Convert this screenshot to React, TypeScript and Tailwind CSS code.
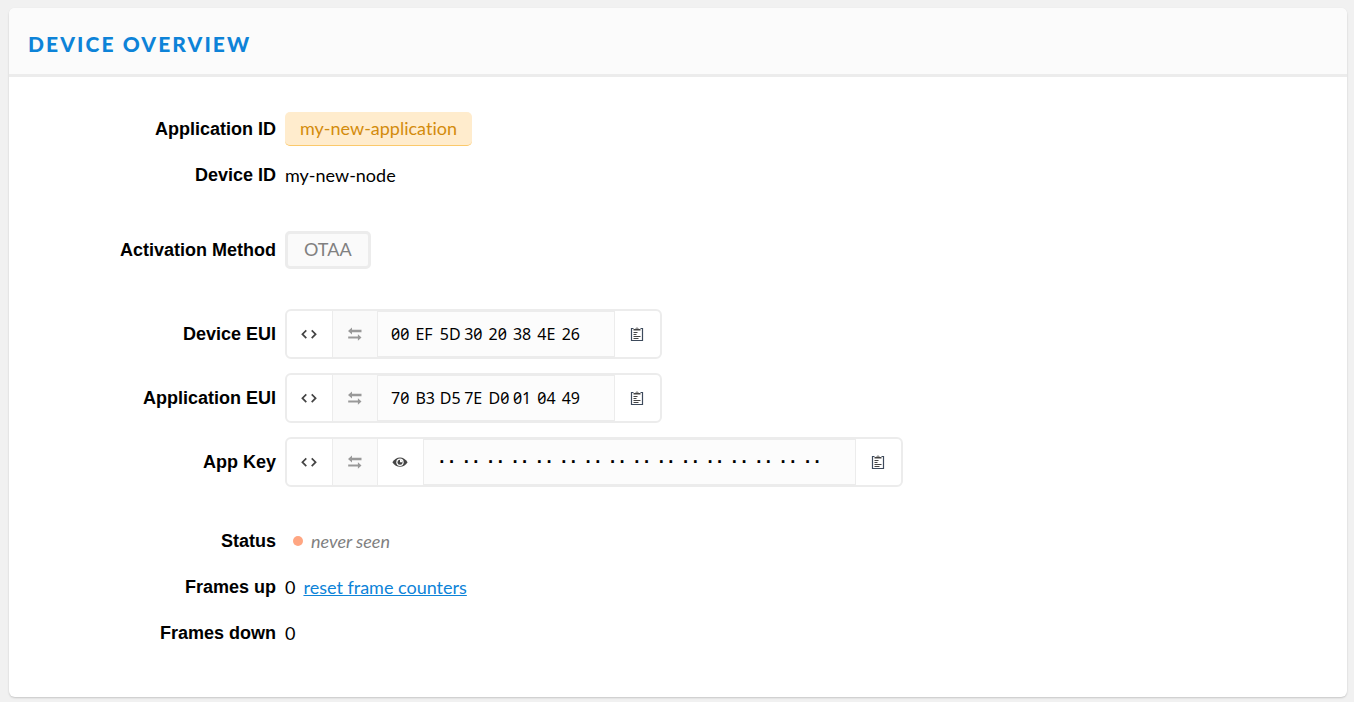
import { useState } from "react";
import type { ReactNode } from "react";

const DEVICE_EUI = ["00", "EF", "5D", "30", "20", "38", "4E", "26"];
const APPLICATION_EUI = ["70", "B3", "D5", "7E", "D0", "01", "04", "49"];
const HIDDEN_KEY = Array.from({ length: 16 }, () => "··");

function CodeIcon() {
  return (
    <svg width="16" height="12" viewBox="0 0 16 12" fill="none" stroke="#444" strokeWidth="1.7" aria-hidden="true">
      <path d="M5.300 2.300 1.400 6.200l3.900 3.900M10.700 2.300l3.900 3.900-3.900 3.900" />
    </svg>
  );
}

function SwapIcon() {
  return (
    <svg width="14" height="14" viewBox="0 0 14 14" fill="#999" aria-hidden="true">
      <path d="M0 4 4 .5v2.200h9.500v2.600H4v2.200zM13.500 10.500l-3.600 3.300v-2.200H.2V9.400h9.700V7.200z" />
    </svg>
  );
}

function EyeIcon() {
  return (
    <svg width="16" height="12" viewBox="0 0 16 12" aria-hidden="true">
      <path d="M.4 6.200C4.200-.2 11.800-.2 15.600 6.200 11.800 12.200 4.200 12.200.4 6.200z" fill="#444" />
      <circle cx="8" cy="6.200" r="3.700" fill="#fff" />
      <circle cx="8" cy="6.200" r="2.500" fill="#444" />
      <path d="M8 6.200V3.700A2.500 2.500 0 0 1 10.500 6.200z" fill="#fff" />
    </svg>
  );
}

function ClipboardIcon() {
  return (
    <svg width="14" height="16" viewBox="0 0 14 16" fill="none" aria-hidden="true">
      <path d="M3.500 2.500h-2v12h11v-12h-2" stroke="#3d4a5c" strokeWidth="1.200" />
      <path d="M3.500 4.500V3h2a1.500 1.500 0 0 1 3 0h2v1.500z" fill="#444" />
      <circle cx="7" cy="2.500" r=".6" fill="#fff" />
      <path d="M3.500 6.500h4M3.500 8.500h3M3.500 10.500h7M3.500 12.500h5" stroke="#444" strokeWidth="1.200" />
    </svg>
  );
}

function Row({ label, children }: { label: string; children: ReactNode }) {
  return (
    <div className="flex min-h-[46px] items-center gap-[9px]">
      <dt className="w-[267px] shrink-0 text-right font-['Liberation_Sans',sans-serif] font-bold">{label}</dt>
      <dd className="flex items-center">{children}</dd>
    </div>
  );
}

function IconButton({ label, className, children }: { label: string; className: string; children: ReactNode }) {
  return (
    <button type="button" aria-label={label} className={`flex items-center justify-center border-[#ececec] pr-[2px] ${className}`}>
      {children}
    </button>
  );
}

function Bytes({ values, className }: { values: string[]; className: string }) {
  return (
    <code
      className={`grid auto-cols-fr grid-flow-col items-center border-y border-r border-[#ececec] bg-[#fcfcfc] pr-7 pl-[13px] text-base whitespace-nowrap ${className}`}
    >
      {values.map((value, index) => (
        <span key={index}>{value}</span>
      ))}
    </code>
  );
}

function ByteField({ values, secret = false }: { values: string[]; secret?: boolean }) {
  const [littleEndian, setLittleEndian] = useState(false);
  const shown = littleEndian ? [...values].reverse() : values;
  return (
    <div className="my-[7px] flex h-[50px] rounded-md border-2 border-[#ececec] bg-white">
      <IconButton label="Toggle format" className="w-[46px] border-r">
        <CodeIcon />
      </IconButton>
      <button
        type="button"
        aria-label="Swap byte order"
        onClick={() => setLittleEndian(!littleEndian)}
        className="flex w-[45px] items-center justify-center border-r border-[#ececec] bg-[#fafafa]"
      >
        <SwapIcon />
      </button>
      {secret && (
        <IconButton label="Show key" className="w-[46px] border-r">
          <EyeIcon />
        </IconButton>
      )}
      <Bytes
        values={shown}
        className={
          secret
            ? "w-[432px] font-['DejaVu_Sans_Mono',monospace] font-bold"
            : "w-[237px] font-['Noto_Sans',sans-serif] slashed-zero tabular-nums"
        }
      />
      <IconButton label="Copy to clipboard" className="w-[45px]">
        <ClipboardIcon />
      </IconButton>
    </div>
  );
}

export default function App() {
  return (
    <div className="min-h-screen bg-[#f1f1f1] pt-2 pr-[7px] pb-1 pl-[9px] font-[Lato,sans-serif] text-lg text-black [font-variant-ligatures:no-common-ligatures]">
      <main className="overflow-hidden rounded-md bg-white shadow-[0_1px_2px_rgba(0,0,0,0.18)]">
        <header className="border-b-[3px] border-[#ececec] bg-[#fbfbfb] px-[19px] pt-5 pb-[14px]">
          <h1 className="text-[21px] leading-8 font-black tracking-widest text-[#0d83d8]">DEVICE OVERVIEW</h1>
        </header>
        <dl className="pt-[29px] pb-[41px]">
          <Row label="Application ID">
            <a
              href="#application"
              className="flex h-[34px] items-center rounded-[5px] border-b border-[#fbc96b] bg-[#ffeccd] px-[15px] pb-[2px] text-[#d38b0c]"
            >
              my-new-application
            </a>
          </Row>
          <Row label="Device ID">my-new-node</Row>
          <div className="mt-[29px]">
            <Row label="Activation Method">
              <span className="flex h-[38px] items-center rounded-[5px] border-[3px] border-[#ececec] bg-[#fafafa] px-4 pb-[2px] text-[#808080]">
                OTAA
              </span>
            </Row>
          </div>
          <div className="mt-[29px]">
            <Row label="Device EUI">
              <ByteField values={DEVICE_EUI} />
            </Row>
            <Row label="Application EUI">
              <ByteField values={APPLICATION_EUI} />
            </Row>
            <Row label="App Key">
              <ByteField values={HIDDEN_KEY} secret />
            </Row>
          </div>
          <div className="mt-6">
            <Row label="Status">
              <span className="mr-2 ml-2 size-[10px] rounded-full bg-[#ffa682]" />
              <em className="text-[#808080]">never seen</em>
            </Row>
            <Row label="Frames up">
              0
              <a href="#reset" className="ml-2 text-[#0d83d8] underline">
                reset frame counters
              </a>
            </Row>
            <Row label="Frames down">0</Row>
          </div>
        </dl>
      </main>
    </div>
  );
}
